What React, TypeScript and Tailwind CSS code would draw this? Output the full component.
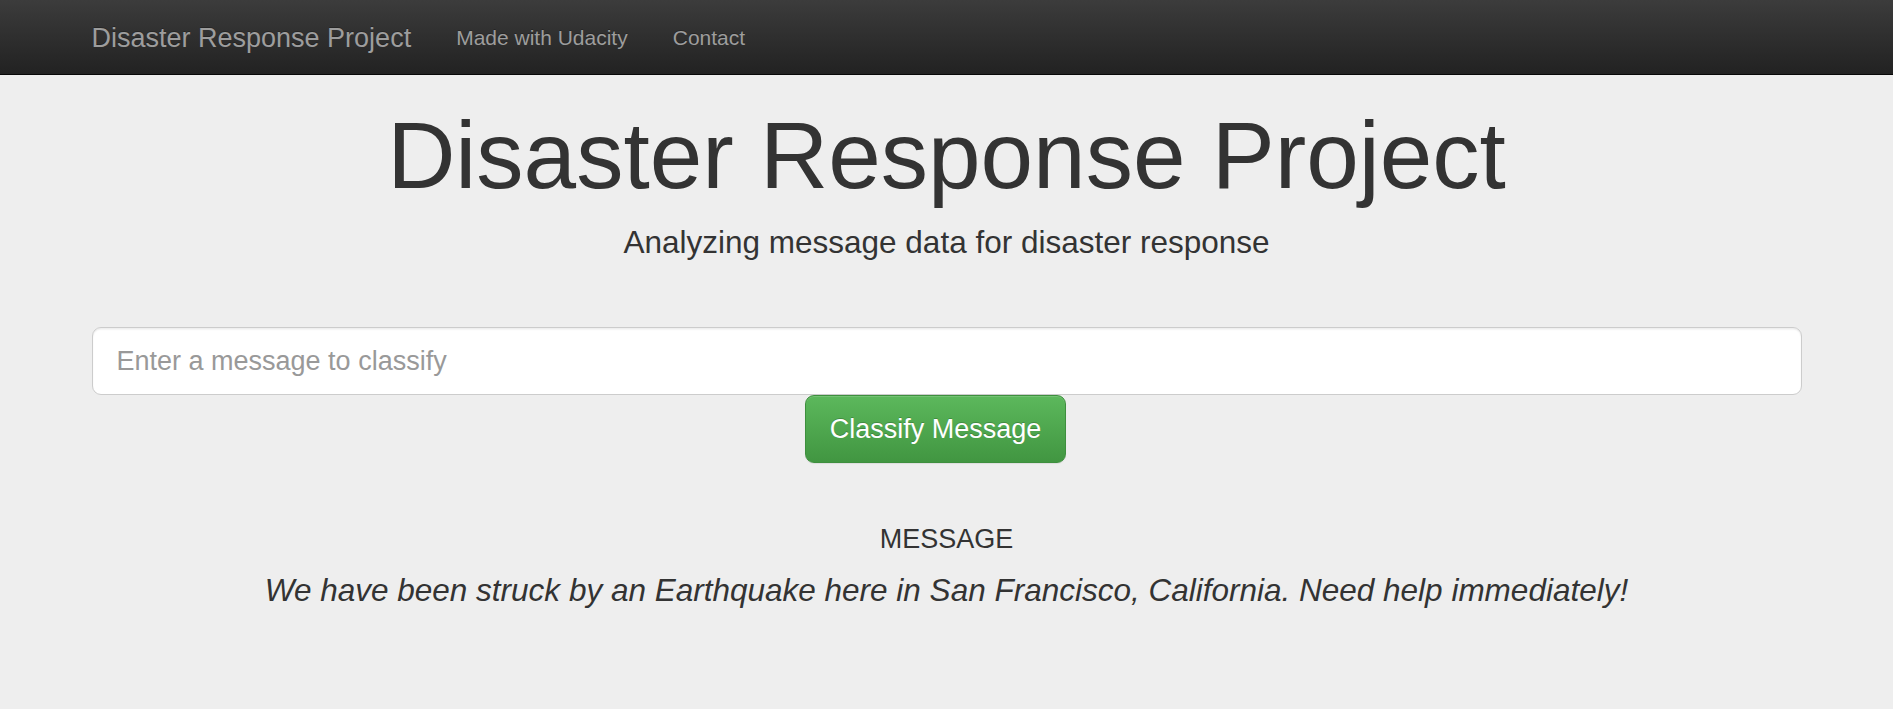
import React from "react";

export default function App() {
  return (
    <div
      className="min-h-screen bg-[#eeeeee] text-[#333333]"
      style={{ fontFamily: '"Liberation Sans", Arial, Helvetica, sans-serif' }}
    >
      <nav className="h-[75px] border-b border-[#080808] bg-gradient-to-b from-[#3c3c3c] to-[#222222]">
        <div className="mx-auto flex h-full max-w-[1755px] px-[22.5px]">
          <a className="-ml-[22.5px] block h-[75px] px-[22.5px] py-[22.5px] text-[27px] leading-[30px] text-[#9d9d9d] [text-shadow:0_-1px_0_rgba(0,0,0,0.25)]">
            Disaster Response Project
          </a>
          <ul className="flex">
            <li>
              <a className="block px-[22.5px] py-[22.5px] text-[21px] leading-[30px] text-[#9d9d9d] [text-shadow:0_-1px_0_rgba(0,0,0,0.25)]">
                Made with Udacity
              </a>
            </li>
            <li>
              <a className="block px-[22.5px] py-[22.5px] text-[21px] leading-[30px] text-[#9d9d9d] [text-shadow:0_-1px_0_rgba(0,0,0,0.25)]">
                Contact
              </a>
            </li>
          </ul>
        </div>
      </nav>

      <div className="mx-auto max-w-[1755px] px-[22.5px] text-center">
        <h1 className="mt-[28px] text-[94.5px] font-normal leading-[104px] text-[#333333]">
          Disaster Response Project
        </h1>
        <p className="mt-[13px] text-[31.5px] leading-[45px] text-[#333333]">
          Analyzing message data for disaster response
        </p>

        <div className="mt-[62px]">
          <input
            type="text"
            placeholder="Enter a message to classify"
            className="block h-[68px] w-full rounded-[9px] border border-[#cccccc] bg-white px-[24px] text-left text-[27px] leading-[36px] text-[#555555] shadow-[inset_0_1.5px_1.5px_rgba(0,0,0,0.075)] outline-none placeholder:text-[#999999]"
          />
          <div className="flex justify-center pr-[22px]">
            <button className="h-[68px] rounded-[9px] border border-[#3e8f3e] bg-gradient-to-b from-[#5cb85c] to-[#419641] px-[24px] text-[27px] leading-[36px] text-white shadow-[inset_0_1px_0_rgba(255,255,255,0.15),0_1px_1px_rgba(0,0,0,0.075)] [text-shadow:0_-1px_0_rgba(0,0,0,0.2)]">
              Classify Message
            </button>
          </div>
        </div>

        <div className="mt-[61px] text-[27px] leading-[30px] text-[#333333]">MESSAGE</div>
        <p className="mt-[14px] text-[31.5px] italic leading-[45px] text-[#333333]">
          We have been struck by an Earthquake here in San Francisco, California. Need help immediately!
        </p>
      </div>
    </div>
  );
}
